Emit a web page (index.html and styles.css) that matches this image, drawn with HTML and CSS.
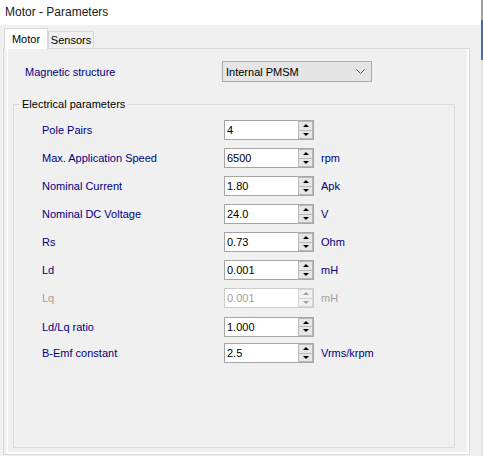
FILE: index.html
```html
<!DOCTYPE html>
<html>
<head>
    <title>Motor - Parameters</title>
    <link rel="stylesheet" href="styles.css">
</head>
<body>
    <div class="window">
        <div class="main">
            <div class="titlebar">Motor - Parameters</div>
            <div class="tabs">
                <div class="tab active">Motor</div>
                <div class="tab">Sensors</div>
            </div>
            <div class="page">
                <div class="page-body">
                    <div class="top-row">
                        <span class="label wide">Magnetic structure</span>
                        <div class="select">
                            <span>Internal PMSM</span>
                            <svg width="9" height="6" viewBox="0 0 9 6"><path d="M0.5 0.5 L4.5 4.5 L8.5 0.5" fill="none" stroke="#555" stroke-width="1"/></svg>
                        </div>
                    </div>
                    <fieldset class="group">
                        <legend>Electrical parameters</legend>
                        <div class="row">
                            <span class="label">Pole Pairs</span>
                            <div class="spin"><span class="val">4</span><div class="btns"><div class="btn"><i class="up"></i></div><div class="btn"><i class="down"></i></div></div></div>
                        </div>
                        <div class="row">
                            <span class="label">Max. Application Speed</span>
                            <div class="spin"><span class="val">6500</span><div class="btns"><div class="btn"><i class="up"></i></div><div class="btn"><i class="down"></i></div></div></div>
                            <span class="unit">rpm</span>
                        </div>
                        <div class="row">
                            <span class="label">Nominal Current</span>
                            <div class="spin"><span class="val">1.80</span><div class="btns"><div class="btn"><i class="up"></i></div><div class="btn"><i class="down"></i></div></div></div>
                            <span class="unit">Apk</span>
                        </div>
                        <div class="row">
                            <span class="label">Nominal DC Voltage</span>
                            <div class="spin"><span class="val">24.0</span><div class="btns"><div class="btn"><i class="up"></i></div><div class="btn"><i class="down"></i></div></div></div>
                            <span class="unit">V</span>
                        </div>
                        <div class="row">
                            <span class="label">Rs</span>
                            <div class="spin"><span class="val">0.73</span><div class="btns"><div class="btn"><i class="up"></i></div><div class="btn"><i class="down"></i></div></div></div>
                            <span class="unit">Ohm</span>
                        </div>
                        <div class="row">
                            <span class="label">Ld</span>
                            <div class="spin"><span class="val">0.001</span><div class="btns"><div class="btn"><i class="up"></i></div><div class="btn"><i class="down"></i></div></div></div>
                            <span class="unit">mH</span>
                        </div>
                        <div class="row disabled">
                            <span class="label">Lq</span>
                            <div class="spin"><span class="val">0.001</span><div class="btns"><div class="btn"><i class="up"></i></div><div class="btn"><i class="down"></i></div></div></div>
                            <span class="unit">mH</span>
                        </div>
                        <div class="row ratio">
                            <span class="label">Ld/Lq ratio</span>
                            <div class="spin"><span class="val">1.000</span><div class="btns"><div class="btn"><i class="up"></i></div><div class="btn"><i class="down"></i></div></div></div>
                        </div>
                        <div class="row">
                            <span class="label">B-Emf constant</span>
                            <div class="spin"><span class="val">2.5</span><div class="btns"><div class="btn"><i class="up"></i></div><div class="btn"><i class="down"></i></div></div></div>
                            <span class="unit">Vrms/krpm</span>
                        </div>
                    </fieldset>
                </div>
            </div>
        </div>
        <div class="edge"></div>
    </div>
</body>
</html>
```

FILE: styles.css
```css
body {
    margin: 0;
    font-family: "Liberation Sans", Arial, sans-serif;
    font-size: 11px;
    color: #000;
    background: #f0f0f0;
}
.window {
    display: flex;
    width: 483px;
    height: 456px;
}
.main {
    width: 481px;
    display: flex;
    flex-direction: column;
}
.edge {
    width: 2px;
    background: linear-gradient(#a0a0a0 0, #a0a0a0 20px, #3d6fb0 20px, #3d6fb0 60px, #e4e4e4 60px);
}
.titlebar {
    height: 25px;
    line-height: 25px;
    padding-left: 5px;
    background: #fff;
    font-size: 12px;
    color: #1a1a1a;
}
.tabs {
    display: flex;
    align-items: flex-end;
    padding: 3px 0 0 4px;
}
.tab {
    height: 17px;
    line-height: 17px;
    width: 46px;
    box-sizing: border-box;
    border: 1px solid #d9d9d9;
    border-bottom: none;
    text-align: center;
    background: #f0f0f0;
}
.tab.active {
    position: relative;
    z-index: 1;
    height: 21px;
    line-height: 20px;
    width: 44px;
    margin-bottom: -1px;
    background: #fff;
}
.page {
    flex: 1;
    margin: 0 11px 1px 3px;
    border: 1px solid #d9d9d9;
    background: #f0f0f0;
    padding-left: 3px;
    display: flex;
}
.page-body {
    flex: 1;
    background: #f0f0f0;
    border-left: 1px solid #fff;
    border-right: 2px solid #fff;
    border-bottom: 2px solid #fff;
}
.top-row {
    display: flex;
    align-items: center;
    height: 21px;
    margin-top: 12px;
    padding-left: 17px;
}
.label {
    width: 182px;
    color: #000080;
}
.label.wide {
    width: 197px;
}
.select {
    width: 150px;
    height: 21px;
    box-sizing: border-box;
    border: 1px solid #acacac;
    background: #e5e5e5;
    display: flex;
    align-items: center;
    justify-content: space-between;
    padding: 0 6px 0 3px;
}
.group {
    margin: 15px 0 0 5px;
    width: 442px;
    box-sizing: border-box;
    border: 1px solid #dcdcdc;
    padding: 5px 0 80px 6px;
    min-width: 0;
}
.group legend {
    padding: 0 2px;
    line-height: 14px;
}
.row {
    display: flex;
    align-items: center;
    height: 28px;
    padding-left: 22px;
}
.row.ratio {
    margin-top: 2px;
    height: 25px;
}
.spin {
    display: flex;
    width: 90px;
    height: 20px;
    box-sizing: border-box;
    border: 1px solid #a5a5a5;
    background: #fff;
}
.val {
    flex: 1;
    line-height: 18px;
    padding-left: 2px;
}
.btns {
    width: 15px;
    display: flex;
    flex-direction: column;
    border: 1px solid #b9b9b9;
    box-sizing: border-box;
}
.btn {
    flex: 1;
    background: #e6e6e6;
    display: flex;
    align-items: center;
    justify-content: center;
}
.btn + .btn {
    border-top: 1px solid #b9b9b9;
}
.up {
    border-left: 3px solid transparent;
    border-right: 3px solid transparent;
    border-bottom: 3px solid #000;
}
.down {
    border-left: 3px solid transparent;
    border-right: 3px solid transparent;
    border-top: 3px solid #000;
}
.unit {
    margin-left: 7px;
    color: #000080;
}
.disabled .label,
.disabled .unit,
.disabled .val {
    color: #a0a0a0;
}
.disabled .spin {
    border-color: #cccccc;
}
.disabled .btns {
    border-color: #d5d5d5;
}
.disabled .btn {
    background: #f0f0f0;
}
.disabled .btn + .btn {
    border-top-color: #d5d5d5;
}
.disabled .up {
    border-bottom-color: #a0a0a0;
}
.disabled .down {
    border-top-color: #a0a0a0;
}
```
